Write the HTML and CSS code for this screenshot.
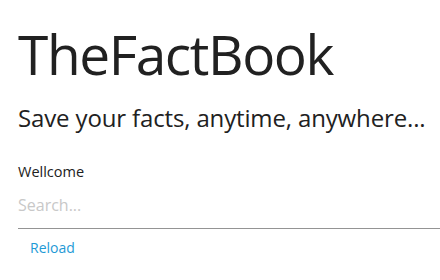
FILE: index.html
```html
<!DOCTYPE html>
<html lang="en">
<head>
<meta charset="utf-8">
<title>TheFactBook</title>
<link rel="stylesheet" href="styles.css">
</head>
<body>
<main class="page">
  <h1 class="title">TheFactBook</h1>
  <h2 class="subtitle">Save your facts, anytime, anywhere...</h2>
  <p class="welcome">Wellcome</p>
  <div class="search">
    <input class="search-input" type="text" placeholder="Search...">
  </div>
  <button class="reload" type="button">Reload</button>
</main>
</body>
</html>
```
FILE: styles.css
```css
html, body {
  margin: 0;
  padding: 0;
  background: #ffffff;
}
body {
  font-family: "Open Sans", "Noto Sans", sans-serif;
  color: #212121;
}
.page {
  display: flex;
  flex-direction: column;
  align-items: flex-start;
  padding: 0 0 0 18px;
}
.title {
  margin: 26px 0 0 0;
  font-size: 55px;
  font-weight: 400;
  line-height: 55px;
  letter-spacing: -1.4px;
}
.subtitle {
  margin: 25px 0 0 0;
  font-size: 24px;
  font-weight: 400;
  line-height: 24px;
  letter-spacing: -0.14px;
}
.welcome {
  margin: 32px 0 0 0;
  font-size: 14.5px;
  line-height: 20px;
}
.search {
  align-self: stretch;
  margin-top: 6px;
}
.search-input {
  display: block;
  width: 100%;
  box-sizing: border-box;
  border: none;
  border-bottom: 1px solid #949494;
  padding: 6px 0 12px 0;
  font-family: inherit;
  font-size: 16px;
  line-height: 22px;
  color: #212121;
  outline: none;
  background: transparent;
}
.search-input::placeholder {
  color: #c8c8c8;
}
.reload {
  margin-top: 7px;
  border: none;
  background: transparent;
  padding: 0 12px;
  font-family: inherit;
  font-size: 14px;
  line-height: 24px;
  color: #1e9ad6;
  cursor: pointer;
}
```
